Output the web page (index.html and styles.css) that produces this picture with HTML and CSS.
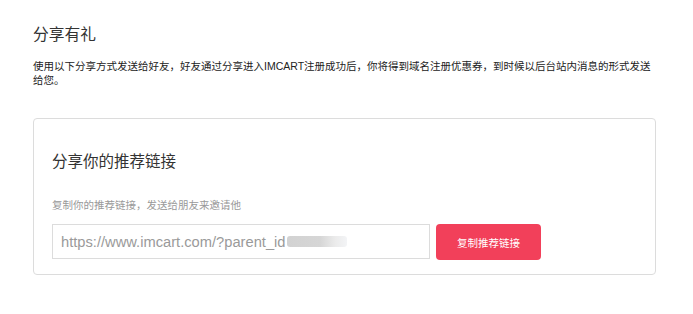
FILE: index.html
```html
<!DOCTYPE html>
<html lang="zh-CN">
<head>
<meta charset="utf-8">
<title>分享有礼</title>
<link rel="stylesheet" href="styles.css">
</head>
<body>
<div class="page">
  <h1 class="title">分享有礼</h1>
  <p class="desc">使用以下分享方式发送给好友，好友通过分享进入IMCART注册成功后，你将得到域名注册优惠券，到时候以后台站内消息的形式发送给您。</p>
  <div class="card">
    <h2 class="card-title">分享你的推荐链接</h2>
    <p class="card-sub">复制你的推荐链接，发送给朋友来邀请他</p>
    <div class="row">
      <div class="link-box"><span class="link-text">https://www.imcart.com/?parent_id</span><span class="blur"></span></div>
      <button class="copy-btn">复制推荐链接</button>
    </div>
  </div>
</div>
</body>
</html>
```

FILE: styles.css
```css
html, body {
  margin: 0;
  padding: 0;
  background: #ffffff;
}
body {
  font-family: "Liberation Sans", "Noto Sans CJK SC", sans-serif;
  color: #333;
}
.page {
  padding: 24px 37px 0 33px;
}
.title {
  margin: 0;
  font-size: 15.75px;
  line-height: 21px;
  font-weight: normal;
  color: #333;
}
.desc {
  margin: 14px 0 0;
  font-size: 10.5px;
  line-height: 14px;
  color: #222;
}
.card {
  margin-top: 31px;
  border: 1px solid #dcdcdc;
  border-radius: 4px;
  padding: 32px 18px 14px;
}
.card-title {
  margin: 0;
  font-size: 15.5px;
  line-height: 21px;
  font-weight: normal;
  color: #333;
}
.card-sub {
  margin: 26px 0 0;
  font-size: 10.5px;
  line-height: 14px;
  color: #999;
}
.row {
  margin-top: 12px;
  display: flex;
  align-items: flex-start;
  gap: 6px;
}
.link-box {
  box-sizing: border-box;
  width: 378px;
  height: 35px;
  border: 1px solid #dcdcdc;
  display: flex;
  align-items: center;
  padding-left: 8px;
  font-size: 14.7px;
  color: #9a9a9a;
  white-space: nowrap;
  overflow: hidden;
}
.link-text {
  line-height: 20px;
}
.blur {
  display: inline-block;
  width: 60px;
  height: 11px;
  margin-left: 2px;
  background: linear-gradient(to right, #d2d2d2 0%, #d6d6d6 55%, #ebebeb 80%, #f3f4f6 100%);
  border-radius: 3px;
}
.copy-btn {
  box-sizing: border-box;
  width: 105px;
  height: 36px;
  border: none;
  border-radius: 4px;
  background: #f2405a;
  color: #fff;
  font-family: "Liberation Sans", "Noto Sans CJK SC", sans-serif;
  font-size: 10.5px;
  padding: 0;
  cursor: pointer;
}
```
